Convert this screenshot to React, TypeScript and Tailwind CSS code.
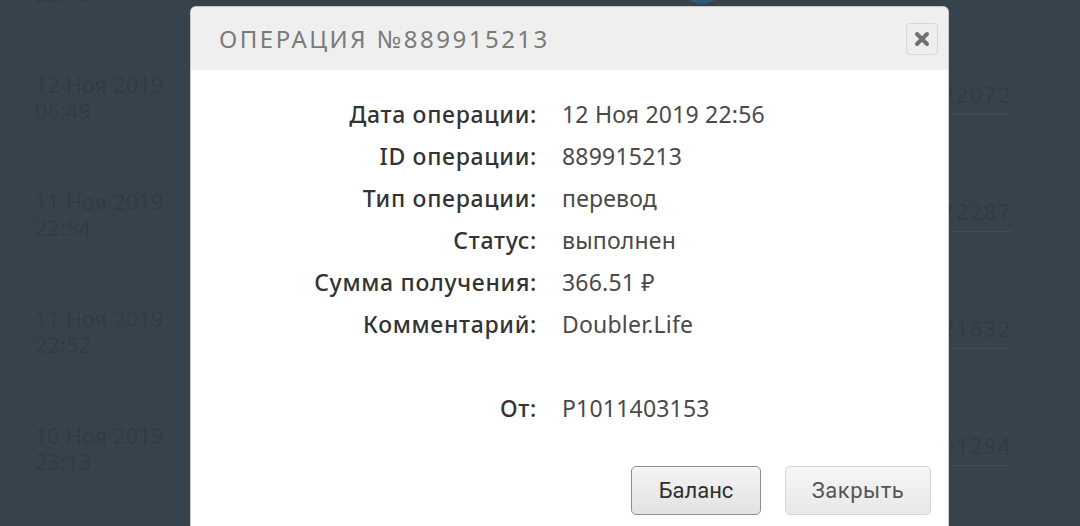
const rows = [
  { d: "12 Ноя 2019", t: "23:40", n: "1222640" },
  { d: "12 Ноя 2019", t: "06:49", n: "1222072" },
  { d: "11 Ноя 2019", t: "22:54", n: "1222287" },
  { d: "11 Ноя 2019", t: "22:52", n: "1221632" },
  { d: "10 Ноя 2019", t: "23:13", n: "1201294" },
];

const details = [
  { label: "Дата операции:", value: "12 Ноя 2019 22:56" },
  { label: "ID операции:", value: "889915213" },
  { label: "Тип операции:", value: "перевод" },
  { label: "Статус:", value: "выполнен" },
  { label: "Сумма получения:", value: "366.51 ₽" },
  { label: "Комментарий:", value: "Doubler.Life" },
];

function Row({ label, value }: { label: string; value: string }) {
  return (
    <div className="flex h-[42px] items-center gap-[25px]">
      <div className="w-[346px] text-right font-medium tracking-[0.7px] text-[#333333]">{label}</div>
      <div className="tracking-[0.2px] text-[#4a4a4a]">{value}</div>
    </div>
  );
}

export default function App() {
  return (
    <div className="relative h-[526px] w-[1080px] overflow-hidden bg-[#37434c] font-['Noto_Sans',sans-serif]">
      {/* dimmed page behind the dialog */}
      <div className="mt-[-78px] flex flex-col text-[21px] text-[#313b43]">
        {rows.map((r, i) => (
          <div key={i} className="flex h-[117px] items-center justify-between pl-[35px] pr-[68px]">
            <div className="leading-[26px] tracking-[0.5px]">
              <div>{r.d}</div>
              <div>{r.t}</div>
            </div>
            <div className="border-b border-[#414c55] pb-[2px] tracking-[2px]">{r.n}</div>
          </div>
        ))}
      </div>
      <div className="absolute left-[680px] top-[-40px] h-[44px] w-[44px] rounded-full bg-[#2d5a78]" />

      {/* dialog */}
      <div className="absolute left-[191px] top-[7px] h-[540px] w-[757px] overflow-hidden rounded-[5px] bg-white shadow-[0_0_0_1px_#c8c8c8]">
        <div className="flex h-[63px] items-center justify-between bg-[#efefef] pl-[28px] pr-[10px]">
          <div className="text-[24px] tracking-[2.5px] text-[#7a7a7a]">ОПЕРАЦИЯ №889915213</div>
          <button className="flex h-[32px] w-[32px] items-center justify-center rounded-[4px] border border-[#d8d8d8] bg-[#eeeeee]">
            <svg width="16" height="16" viewBox="0 0 16 16">
              <path d="M3 3L13 13M13 3L3 13" stroke="#707070" strokeWidth="4" strokeLinecap="round" />
            </svg>
          </button>
        </div>
        <div className="pt-[23px] text-[23px]">
          {details.map((d) => (
            <Row key={d.label} label={d.label} value={d.value} />
          ))}
          <div className="h-[42px]" />
          <Row label="От:" value="P1011403153" />
        </div>
        <div className="mt-[37px] flex justify-end gap-[24px] pr-[17px] font-['Roboto',sans-serif] text-[22px]">
          <button className="h-[49px] w-[130px] rounded-[5px] border border-[#8f8f8f] bg-gradient-to-b from-[#f4f4f4] to-[#e2e2e2] text-[#2f2f2f]">
            Баланс
          </button>
          <button className="h-[49px] w-[146px] rounded-[5px] border border-[#d6d6d6] bg-gradient-to-b from-[#f6f6f6] to-[#e8e8e8] tracking-[0.5px] text-[#555555]">
            Закрыть
          </button>
        </div>
      </div>
    </div>
  );
}
